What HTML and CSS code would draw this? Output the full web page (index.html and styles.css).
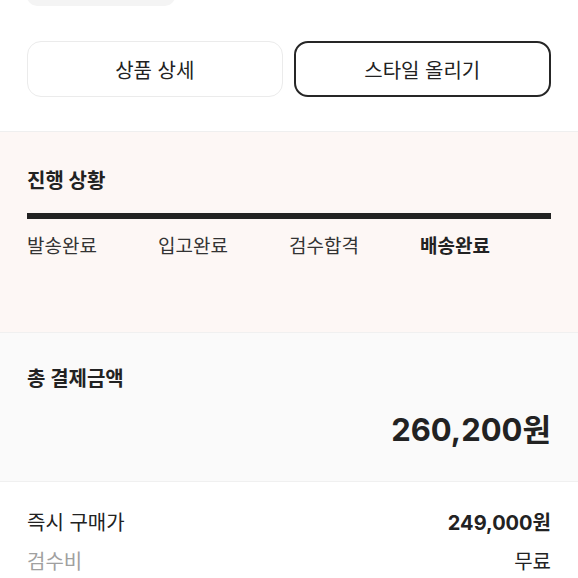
FILE: index.html
```html
<!DOCTYPE html>
<html lang="ko">
<head>
<meta charset="utf-8">
<link rel="stylesheet" href="styles.css">
</head>
<body>
<div class="page">
  <div class="peek">
    <div class="peek-box"></div>
    <div class="peek-text">230</div>
  </div>
  <div class="actions">
    <button class="btn btn-light">상품 상세</button>
    <button class="btn btn-dark">스타일 올리기</button>
  </div>
  <section class="progress">
    <h2 class="title">진행 상황</h2>
    <div class="bar"></div>
    <div class="steps">
      <span class="step">발송완료</span>
      <span class="step">입고완료</span>
      <span class="step">검수합격</span>
      <span class="step step-active">배송완료</span>
    </div>
  </section>
  <section class="total">
    <h2 class="title">총 결제금액</h2>
    <div class="amount">260,200원</div>
  </section>
  <section class="details">
    <div class="row">
      <span class="label">즉시 구매가</span>
      <span class="value value-bold">249,000원</span>
    </div>
    <div class="row">
      <span class="label label-muted">검수비</span>
      <span class="value">무료</span>
    </div>
  </section>
</div>
</body>
</html>
```
FILE: styles.css
```css
* { box-sizing: border-box; }
html, body { margin: 0; padding: 0; background: #fff; }
body {
  font-family: Inter, "Noto Sans CJK KR", sans-serif;
  color: #222;
  width: 578px;
  overflow: hidden;
}
.peek {
  height: 6px;
  overflow: hidden;
  display: flex;
  padding-left: 27px;
}
.peek-box {
  width: 148px;
  height: 40px;
  margin-top: -34px;
  background: #f4f4f4;
  border-radius: 10px;
}
.peek-text {
  margin-left: 28px;
  margin-top: -17px;
  font-size: 19px;
  line-height: 20px;
  color: #aaa;
}
.actions {
  display: flex;
  gap: 11px;
  padding: 35px 27px 34px;
}
.btn {
  flex: 1;
  height: 56px;
  border-radius: 14px;
  background: #fff;
  font-family: inherit;
  font-size: 20px;
  color: #222;
  cursor: pointer;
  padding: 0;
}
.btn-light { border: 1px solid #ebebeb; }
.btn-dark { border: 2px solid #262626; }
.progress {
  background: #fdf7f5;
  border-top: 1px solid #efefef;
  padding: 35px 27px 72px;
}
.title {
  margin: 0;
  font-size: 20px;
  line-height: 28px;
  font-weight: 700;
  color: #222;
}
.bar {
  height: 6px;
  background: #222;
  margin-top: 18px;
}
.steps {
  display: grid;
  grid-template-columns: repeat(4, 1fr);
  margin-top: 15px;
}
.step {
  font-size: 19px;
  line-height: 26px;
  color: #333;
}
.step-active { font-weight: 700; color: #222; }
.total {
  background: #fafafa;
  border-top: 1px solid #f0f0f0;
  border-bottom: 1px solid #f0f0f0;
  padding: 32px 27px 32px;
}
.amount {
  margin-top: 18px;
  text-align: right;
  font-size: 31px;
  line-height: 38px;
  font-weight: 700;
  color: #222;
}
.details {
  padding: 28px 27px 0;
  display: flex;
  flex-direction: column;
  gap: 13px;
}
.row {
  display: flex;
  justify-content: space-between;
  font-size: 20px;
  line-height: 26px;
}
.label { color: #222; }
.label-muted { color: #a0a0a0; }
.value { color: #222; }
.value-bold { font-weight: 700; }
```
